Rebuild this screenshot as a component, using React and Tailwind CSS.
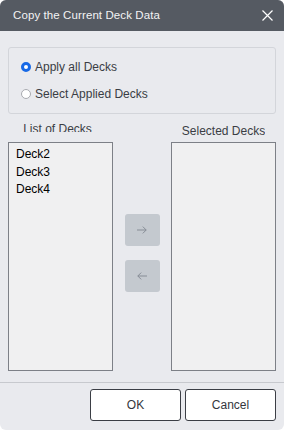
export default function App() {
  const decks = ["Deck2", "Deck3", "Deck4"];

  return (
    <div className="w-[285px] h-[430px] bg-white font-['Liberation_Sans',Arial,sans-serif]">
      <div className="w-[284px] h-[430px] bg-[#e9eaee] rounded-[6px] overflow-hidden flex flex-col">
        {/* title bar */}
        <div className="h-[31px] bg-[#555a62] flex items-center justify-between pl-[13px] pr-[11px]">
          <span className="text-[11.5px] text-[#f3f3f4] tracking-[0.1px]">Copy the Current Deck Data</span>
          <svg width="11" height="11" viewBox="0 0 11 11" className="text-white">
            <path d="M0.5 0.5 L10.5 10.5 M10.5 0.5 L0.5 10.5" stroke="currentColor" strokeWidth="1.2" />
          </svg>
        </div>

        <div className="px-2 pt-4 flex flex-col">
          {/* mode group */}
          <div className="h-[67px] border border-[#d3d5da] rounded-[3px] flex flex-col pl-3 pt-[12px] gap-[13px] text-[12px] text-[#3a3d44]">
            <label className="flex items-center gap-[4px] h-[14px]">
              <span className="w-[10px] h-[10px] rounded-full border-[3px] border-[#1769e6] bg-white" />
              Apply all Decks
            </label>
            <label className="flex items-center gap-[4px] h-[14px]">
              <span className="w-[10px] h-[10px] rounded-full border border-[#a9abb0] bg-white" />
              Select Applied Decks
            </label>
          </div>

          {/* list labels */}
          <div className="h-[28px] flex text-[12px] text-[#3a3d44] leading-[14px]">
            <div className="w-[105px] flex justify-center">
              <div className="mt-[10px] h-[8px] overflow-hidden">
                <div className="-mt-[2px] pr-[6px]">List of Decks</div>
              </div>
            </div>
            <div className="flex-1" />
            <div className="w-[105px] flex justify-center">
              <div className="mt-[12px] h-[9px] overflow-hidden">
                <div className="-mt-[2px]">Selected Decks</div>
              </div>
            </div>
          </div>

          {/* lists */}
          <div className="h-[229px] flex">
            <div className="w-[105px] border border-[#7d8087] bg-[#f0f0f1] pl-[7px] pt-[3px] flex flex-col text-[12px] text-black leading-[17.5px]">
              {decks.map((d) => (
                <div key={d}>{d}</div>
              ))}
            </div>
            <div className="flex-1 flex flex-col items-center justify-center gap-[14px] pb-[7px]">
              <button className="w-[35px] h-[32px] rounded-[3px] bg-[#c4c9cf] flex items-center justify-center">
                <svg width="10" height="8" viewBox="0 0 10 8" className="text-[#878d96]">
                  <path d="M0 4 H9.2 M5.8 0.6 L9.2 4 L5.8 7.4" stroke="currentColor" strokeWidth="1" fill="none" />
                </svg>
              </button>
              <button className="w-[35px] h-[32px] rounded-[3px] bg-[#c4c9cf] flex items-center justify-center">
                <svg width="10" height="8" viewBox="0 0 10 8" className="text-[#878d96]">
                  <path d="M10 4 H0.8 M4.2 0.6 L0.8 4 L4.2 7.4" stroke="currentColor" strokeWidth="1" fill="none" />
                </svg>
              </button>
            </div>
            <div className="w-[105px] border border-[#7d8087] bg-[#f0f0f1]" />
          </div>
        </div>

        {/* footer */}
        <div className="mt-[11px] border-t border-[#c7c9ce] pt-[6px] px-2 flex justify-end gap-[4px]">
          <button className="w-[91px] h-[32px] rounded-[3px] border border-[#3b3e45] bg-white text-[12px] text-[#33363c]">
            OK
          </button>
          <button className="w-[91px] h-[32px] rounded-[3px] border border-[#3b3e45] bg-white text-[12px] text-[#33363c]">
            Cancel
          </button>
        </div>
      </div>
    </div>
  );
}
